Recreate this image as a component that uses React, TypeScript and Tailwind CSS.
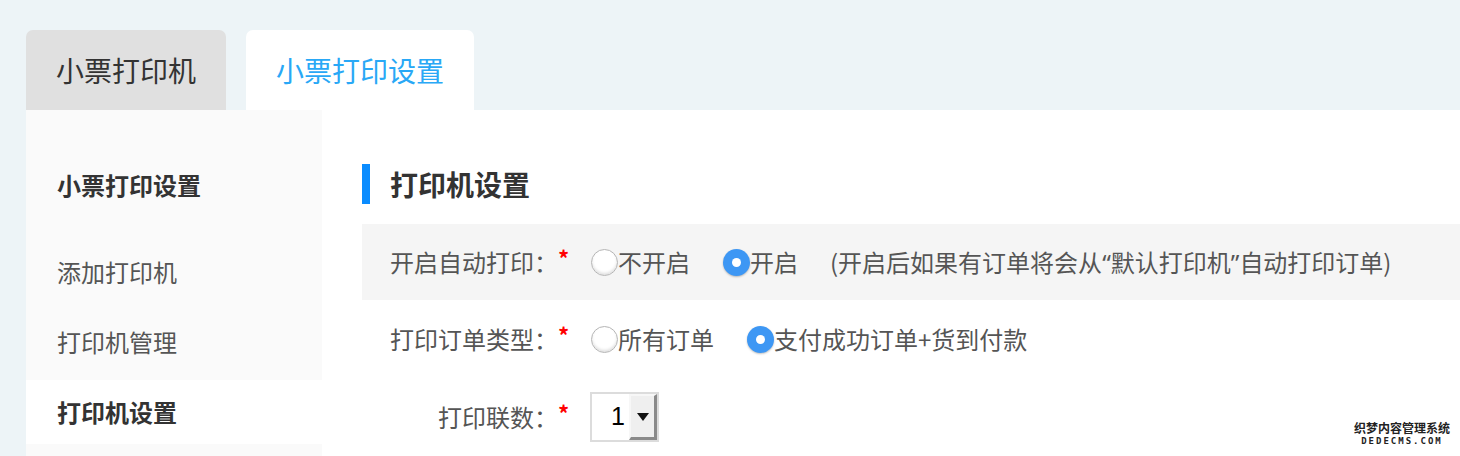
import { useState } from 'react'

const FONT = { fontFamily: '"Noto Sans CJK SC", "Noto Sans", sans-serif' }
const LATIN = { fontFamily: '"Noto Sans", "Liberation Sans", sans-serif' }

function Radio({ checked }: { checked: boolean }) {
  if (checked) {
    return (
      <span className="flex h-[27px] w-[27px] shrink-0 items-center justify-center rounded-full bg-[#3d97f4] shadow-[0_1px_2px_rgba(0,0,0,0.25)]">
        <span className="h-[9px] w-[9px] rounded-full bg-white" />
      </span>
    )
  }
  return (
    <span className="h-[27px] w-[27px] shrink-0 rounded-full border border-[#b5b5b5] bg-white shadow-[inset_0_-2px_3px_rgba(0,0,0,0.12)]" />
  )
}

function Row({ label, bg, children }: { label: string; bg?: boolean; children: React.ReactNode }) {
  return (
    <div className={`flex items-center pl-[28px] ${bg ? 'h-[76px] bg-[#f5f5f5]' : 'h-[78px]'}`}>
      <div className="w-[168px] text-right text-[24px] text-[#555]">{label}</div>
      <span className="-mt-[10px] w-[33px] text-[22px] leading-none font-bold text-[#ff0000]">*</span>
      <div className="flex items-center text-[24px] text-[#555]">{children}</div>
    </div>
  )
}

export default function App() {
  const [tab] = useState<'printer' | 'settings'>('settings')
  const [auto, setAuto] = useState(true)
  const [orderType, setOrderType] = useState<'all' | 'paid'>('paid')

  return (
    <div className="relative h-[456px] w-[1460px] overflow-hidden bg-[#edf4f7] pl-[26px] pt-[30px]" style={FONT}>
      {/* Tabs */}
      <div className="flex gap-[20px]">
        <div
          className={`flex h-[80px] w-[200px] items-center justify-center rounded-t-[7px] text-[28px] ${
            tab === 'printer' ? 'bg-white text-[#29a8f6]' : 'bg-[#e0e0e0] text-[#333]'
          }`}
        >
          小票打印机
        </div>
        <div
          className={`flex h-[80px] w-[228px] items-center justify-center rounded-t-[7px] text-[28px] ${
            tab === 'settings' ? 'bg-white text-[#29a8f6]' : 'bg-[#e0e0e0] text-[#333]'
          }`}
        >
          小票打印设置
        </div>
      </div>

      <div className="flex h-[346px]">
        {/* Sidebar */}
        <div className="w-[296px] shrink-0 bg-[#fafafa]">
          <div className="mb-[28px] mt-[48px] flex h-[54px] items-center pl-[31px] text-[24px] font-bold text-[#333]">
            小票打印设置
          </div>
          <div className="flex flex-col gap-[6px]">
            <div className="flex h-[64px] items-center pl-[31px] text-[24px] text-[#555]">添加打印机</div>
            <div className="flex h-[64px] items-center pl-[31px] text-[24px] text-[#555]">打印机管理</div>
            <div className="flex h-[64px] items-center bg-white pl-[31px] text-[24px] font-bold text-[#333]">打印机设置</div>
          </div>
        </div>

        {/* Main */}
        <div className="flex-1 bg-white pl-[40px] pt-[54px]">
          <div className="flex h-[40px] items-center gap-[20px]">
            <span className="h-[40px] w-[8px] bg-[#0a8cff]" />
            <span className="text-[28px] font-bold text-[#333]">打印机设置</span>
          </div>

          <div className="mt-[20px]">
            <Row label="开启自动打印：" bg>
              <label className="mr-[33px] flex cursor-pointer items-center" onClick={() => setAuto(false)}>
                <Radio checked={!auto} />
                <span>不开启</span>
              </label>
              <label className="mr-[32px] flex cursor-pointer items-center" onClick={() => setAuto(true)}>
                <Radio checked={auto} />
                <span>开启</span>
              </label>
              <span>
                (开启后如果有订单将会从<span style={LATIN}>“</span>默认打印机<span style={LATIN}>”</span>自动打印订单)
              </span>
            </Row>

            <Row label="打印订单类型：">
              <label className="mr-[33px] flex cursor-pointer items-center" onClick={() => setOrderType('all')}>
                <Radio checked={orderType === 'all'} />
                <span>所有订单</span>
              </label>
              <label className="flex cursor-pointer items-center" onClick={() => setOrderType('paid')}>
                <Radio checked={orderType === 'paid'} />
                <span>支付成功订单+货到付款</span>
              </label>
            </Row>

            <Row label="打印联数：">
              <div className="-ml-[1px] flex h-[50px] w-[69px] border-2 border-[#dcdcdc] bg-white">
                <div className="flex flex-1 items-center justify-end pr-[4px] text-[25px] text-black" style={{ fontFamily: '"Liberation Sans", sans-serif' }}>
                  1
                </div>
                <div className="flex w-[28px] items-center justify-center border-b-[3px] border-l-[2px] border-r-[3px] border-t-[2px] border-b-[#8a8a8a] border-l-[#f7f7f7] border-r-[#8a8a8a] border-t-[#f7f7f7] bg-[#efefef]">
                  <svg width="12" height="8" viewBox="0 0 12 8">
                    <path d="M0 0 L12 0 L6 8 Z" fill="#111" />
                  </svg>
                </div>
              </div>
            </Row>
          </div>
        </div>
      </div>

      {/* Watermark */}
      <div className="absolute bottom-[10px] right-[10px] flex flex-col items-center bg-white leading-none">
        <span className="text-[12px] font-bold text-[#222]">织梦内容管理系统</span>
        <span className="mt-[3px] text-[9px] font-bold tracking-[2px] text-[#222]" style={{ fontFamily: '"DejaVu Sans Mono", monospace' }}>
          DEDECMS.COM
        </span>
      </div>
    </div>
  )
}
